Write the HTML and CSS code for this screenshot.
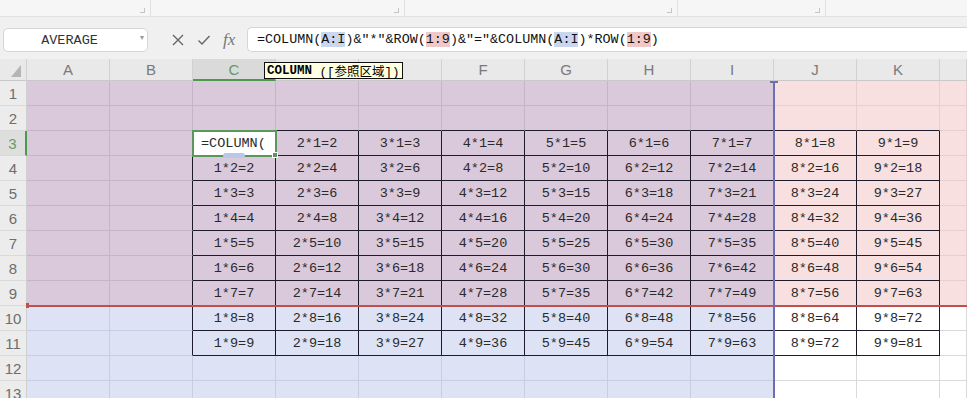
FILE: index.html
```html
<!DOCTYPE html>
<html>
<head>
<meta charset="utf-8">
<link rel="stylesheet" href="styles.css">
</head>
<body>
<div class="app">
  <div class="ribbon">
    <div class="rseg s1"><span class="corner"></span></div>
    <div class="rseg s2"><span class="corner"></span></div>
    <div class="rseg s3"><span class="corner"></span></div>
    <div class="rseg s4"><span class="corner"></span></div>
    <div class="rseg grow"></div>
  </div>
  <div class="fbar">
    <div class="namebox"><span class="nametext">AVERAGE</span><span class="dd">▾</span></div>
    <div class="ficons">
      <svg width="14" height="14" viewBox="0 0 14 14"><path d="M2 2 L12 12 M12 2 L2 12" stroke="#666" stroke-width="1.4" fill="none"/></svg>
      <svg width="14" height="14" viewBox="0 0 14 14"><path d="M1.5 7.5 L5 11 L12.5 3" stroke="#666" stroke-width="1.4" fill="none"/></svg>
      <span class="fx">fx</span>
    </div>
    <div class="formula">=COLUMN(<span class="hb">A:I</span>)&amp;"*"&amp;ROW(<span class="hr">1:9</span>)&amp;"="&amp;COLUMN(<span class="hb">A:I</span>)*ROW(<span class="hr">1:9</span>)</div>
  </div>
  <div class="sheet">
    <div class="grid">
      <div class="hd corner-cell"><svg width="10" height="12" viewBox="0 0 10 12"><path d="M10 0 L10 12 L0 12 Z" fill="#b5b5b5"/></svg></div>
      <div class="hd">A</div><div class="hd">B</div><div class="hd sel">C</div><div class="hd"></div><div class="hd"></div><div class="hd">F</div><div class="hd">G</div><div class="hd">H</div><div class="hd">I</div><div class="hd">J</div><div class="hd">K</div><div class="hd"></div>

      <div class="rh">1</div>
      <div class="c p"></div><div class="c p"></div><div class="c p"></div><div class="c p"></div><div class="c p"></div><div class="c p"></div><div class="c p"></div><div class="c p"></div><div class="c p"></div><div class="c k"></div><div class="c k"></div><div class="c k"></div>

      <div class="rh">2</div>
      <div class="c p"></div><div class="c p"></div><div class="c p xt"></div><div class="c p xt"></div><div class="c p xt"></div><div class="c p xt"></div><div class="c p xt"></div><div class="c p xt"></div><div class="c p xt"></div><div class="c k xt"></div><div class="c k xt"></div><div class="c k"></div>

      <div class="rh rsel">3</div>
      <div class="c p"></div><div class="c p xl"></div><div class="c act">=COLUMN(</div><div class="c p x">2*1=2</div><div class="c p x">3*1=3</div><div class="c p x">4*1=4</div><div class="c p x">5*1=5</div><div class="c p x">6*1=6</div><div class="c p x">7*1=7</div><div class="c k x">8*1=8</div><div class="c k x">9*1=9</div><div class="c k"></div>

      <div class="rh">4</div>
      <div class="c p"></div><div class="c p xl"></div><div class="c p x">1*2=2</div><div class="c p x">2*2=4</div><div class="c p x">3*2=6</div><div class="c p x">4*2=8</div><div class="c p x">5*2=10</div><div class="c p x">6*2=12</div><div class="c p x">7*2=14</div><div class="c k x">8*2=16</div><div class="c k x">9*2=18</div><div class="c k"></div>

      <div class="rh">5</div>
      <div class="c p"></div><div class="c p xl"></div><div class="c p x">1*3=3</div><div class="c p x">2*3=6</div><div class="c p x">3*3=9</div><div class="c p x">4*3=12</div><div class="c p x">5*3=15</div><div class="c p x">6*3=18</div><div class="c p x">7*3=21</div><div class="c k x">8*3=24</div><div class="c k x">9*3=27</div><div class="c k"></div>

      <div class="rh">6</div>
      <div class="c p"></div><div class="c p xl"></div><div class="c p x">1*4=4</div><div class="c p x">2*4=8</div><div class="c p x">3*4=12</div><div class="c p x">4*4=16</div><div class="c p x">5*4=20</div><div class="c p x">6*4=24</div><div class="c p x">7*4=28</div><div class="c k x">8*4=32</div><div class="c k x">9*4=36</div><div class="c k"></div>

      <div class="rh">7</div>
      <div class="c p"></div><div class="c p xl"></div><div class="c p x">1*5=5</div><div class="c p x">2*5=10</div><div class="c p x">3*5=15</div><div class="c p x">4*5=20</div><div class="c p x">5*5=25</div><div class="c p x">6*5=30</div><div class="c p x">7*5=35</div><div class="c k x">8*5=40</div><div class="c k x">9*5=45</div><div class="c k"></div>

      <div class="rh">8</div>
      <div class="c p"></div><div class="c p xl"></div><div class="c p x">1*6=6</div><div class="c p x">2*6=12</div><div class="c p x">3*6=18</div><div class="c p x">4*6=24</div><div class="c p x">5*6=30</div><div class="c p x">6*6=36</div><div class="c p x">7*6=42</div><div class="c k x">8*6=48</div><div class="c k x">9*6=54</div><div class="c k"></div>

      <div class="rh">9</div>
      <div class="c p"></div><div class="c p xl"></div><div class="c p x">1*7=7</div><div class="c p x">2*7=14</div><div class="c p x">3*7=21</div><div class="c p x">4*7=28</div><div class="c p x">5*7=35</div><div class="c p x">6*7=42</div><div class="c p x">7*7=49</div><div class="c k x">8*7=56</div><div class="c k x">9*7=63</div><div class="c k"></div>

      <div class="rh">10</div>
      <div class="c b"></div><div class="c b xl"></div><div class="c b x">1*8=8</div><div class="c b x">2*8=16</div><div class="c b x">3*8=24</div><div class="c b x">4*8=32</div><div class="c b x">5*8=40</div><div class="c b x">6*8=48</div><div class="c b x">7*8=56</div><div class="c w x">8*8=64</div><div class="c w x">9*8=72</div><div class="c w"></div>

      <div class="rh">11</div>
      <div class="c b"></div><div class="c b xl"></div><div class="c b x">1*9=9</div><div class="c b x">2*9=18</div><div class="c b x">3*9=27</div><div class="c b x">4*9=36</div><div class="c b x">5*9=45</div><div class="c b x">6*9=54</div><div class="c b x">7*9=63</div><div class="c w x">8*9=72</div><div class="c w x">9*9=81</div><div class="c w"></div>

      <div class="rh">12</div>
      <div class="c b"></div><div class="c b"></div><div class="c b"></div><div class="c b"></div><div class="c b"></div><div class="c b"></div><div class="c b"></div><div class="c b"></div><div class="c b"></div><div class="c w"></div><div class="c w"></div><div class="c w"></div>

      <div class="rh">13</div>
      <div class="c b"></div><div class="c b"></div><div class="c b"></div><div class="c b"></div><div class="c b"></div><div class="c b"></div><div class="c b"></div><div class="c b"></div><div class="c b"></div><div class="c w"></div><div class="c w"></div><div class="c w"></div>
    </div>
    <div class="tip"><b>COLUMN</b> ([参照区域])</div>
    <div class="hline"></div>
    <div class="vline"></div>
  </div>
</div>
</body>
</html>
```
FILE: styles.css
```css
html, body { margin: 0; padding: 0; background: #fff; }
.app { width: 967px; height: 398px; overflow: hidden; font-family: "Liberation Sans", sans-serif; }

.ribbon { height: 16px; background: #f6f6f6; border-bottom: 1px solid #e2e2e2; display: flex; }
.rseg { position: relative; border-right: 1px solid #e0e0e0; box-sizing: border-box; height: 16px; }
.rseg.s1 { width: 151px; }
.rseg.s2 { width: 254px; }
.rseg.s3 { width: 273px; }
.rseg.s4 { width: 148px; }
.rseg.grow { flex: 1; border-right: none; }
.corner { position: absolute; right: 5px; bottom: 3px; width: 4px; height: 4px; border-right: 1px solid #c4c4c4; border-bottom: 1px solid #c4c4c4; }

.fbar { height: 42px; background: #f0f0f0; display: flex; align-items: flex-start; padding-top: 11px; box-sizing: border-box; }
.namebox { margin-left: 3px; width: 145px; height: 24px; background: #fff; border: 1px solid #d6d6d6; border-radius: 5px; box-sizing: border-box; display: flex; align-items: center; position: relative; }
.nametext { flex: 1; text-align: center; font: 13.5px "Liberation Mono", monospace; color: #333; padding-right: 12px; }
.dd { position: absolute; right: 3px; top: 4px; font-size: 8px; color: #999; }
.ficons { width: 99px; display: flex; align-items: center; height: 24px; gap: 12px; padding-left: 23px; box-sizing: border-box; }
.fx { font: italic 17px "Liberation Serif", serif; color: #777; }
.formula { flex: 1; height: 25px; margin-top: -1px; background: #fff; border: 1px solid #d6d6d6; border-right: none; border-radius: 5px 0 0 5px; box-sizing: border-box; padding-left: 9px; display: flex; align-items: center; font: 13.4px "Liberation Mono", monospace; color: #111; white-space: pre; }
.hb { background: #c9d6ee; }
.hr { background: #f1c8c8; }

.sheet { position: relative; }
.grid { display: grid; grid-template-columns: 27px repeat(11, 83px) 1fr; grid-template-rows: 22px repeat(13, 25px); }
.hd { background: #e9e9e9; border-right: 1px solid #d2d2d2; border-bottom: 1px solid #c9c9c9; box-sizing: border-box; display: flex; align-items: center; justify-content: center; font-size: 15px; color: #7a7a7a; }
.hd.sel { background: #dadada; color: #5f9a66; border-bottom: 2px solid #4c9a4c; padding-top: 1px; }
.corner-cell { justify-content: flex-end; align-items: flex-end; padding: 0 5px 3px 0; }
.rh { background: #ececec; border-right: 1px solid #cfcfcf; border-bottom: 1px solid #dadada; box-sizing: border-box; display: flex; align-items: center; justify-content: center; font-size: 15px; color: #6e6e6e; }
.rh.rsel { background: #dedede; color: #6a9a6c; border-right: 2px solid #4c9a4c; }

.c { --g: #dadada; border-right: 1px solid var(--g); border-bottom: 1px solid var(--g); box-sizing: border-box; display: flex; align-items: center; justify-content: center; font: 13.5px "Liberation Mono", monospace; color: #2a2a2a; padding-top: 1px; }
.p { background: #dac8db; --g: #c6b4c8; }
.k { background: #f7e0df; --g: #e8cfcf; }
.b { background: #dde3f4; --g: #c7cee4; }
.w { background: #fff; --g: #d9d9d9; }
.x { border-right-color: #1d1b2c; border-bottom-color: #1d1b2c; }
.xl { border-right-color: #1d1b2c; }
.xt { border-bottom-color: #1d1b2c; }
.act { background: #fff; position: relative; justify-content: flex-start; padding-left: 8px; border-right: 1px solid #1d1b2c; border-bottom: 1px solid #1d1b2c; outline: 2px solid #5a975a; outline-offset: -1px; z-index: 2; }
.act::after { content: ""; position: absolute; right: -3px; bottom: -3px; width: 4px; height: 4px; background: #5a975a; border: 1px solid #fff; }
.act::before { content: ""; position: absolute; left: 30px; bottom: -3px; width: 22px; height: 5px; border-radius: 3px; background: #b9c8e6; }

.tip { position: absolute; left: 264px; top: 3px; height: 17px; padding: 0 2px; background: #ffffe1; border: 1px solid #111; box-sizing: border-box; display: flex; align-items: center; font: 12.5px "Liberation Mono", "Noto Sans CJK SC", monospace; color: #000; white-space: pre; z-index: 5; }
.tip b { font-weight: bold; }
.hline { position: absolute; left: 27px; right: 0; top: 246px; height: 2px; background: #c0504d; z-index: 4; }
.hline::before { content: ""; position: absolute; left: -1px; top: -2px; width: 3px; height: 5px; background: #c0504d; }
.vline { position: absolute; left: 773px; top: 22px; bottom: -20px; width: 2px; background: #6e6eb4; z-index: 4; }
.vline::before { content: ""; position: absolute; left: -3px; top: 0; width: 8px; height: 2px; background: #6e6eb4; }
```
